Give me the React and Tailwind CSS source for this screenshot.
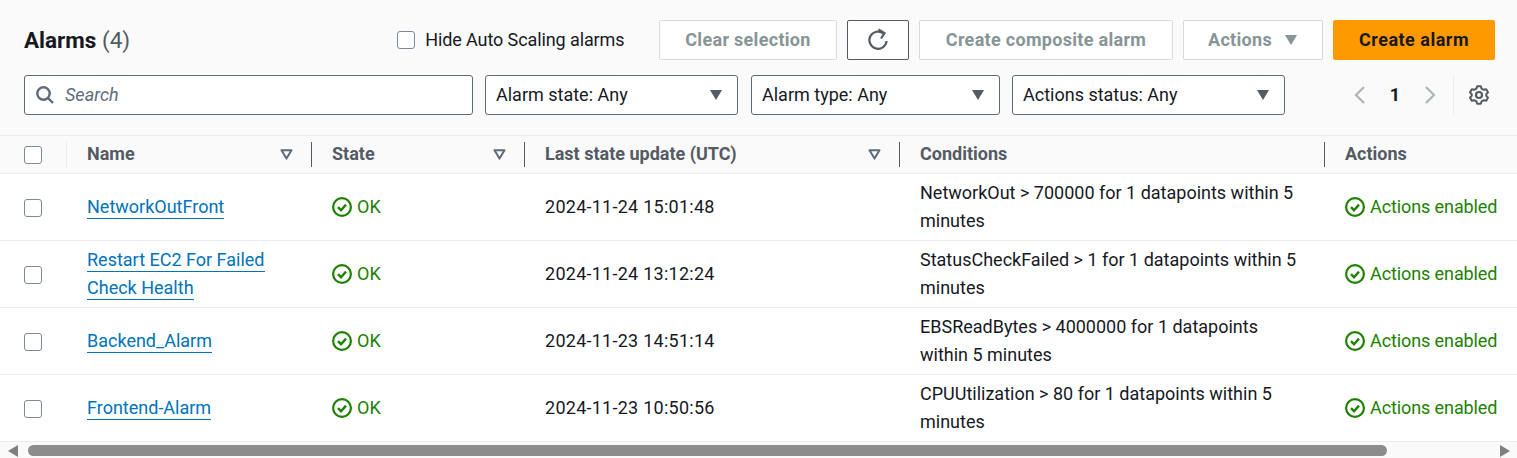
import React from 'react';

const ROWS = [
  { name: ['NetworkOutFront'], updated: '2024-11-24 15:01:48', cond: ['NetworkOut > 700000 for 1 datapoints within 5', 'minutes'] },
  { name: ['Restart EC2 For Failed', 'Check Health'], updated: '2024-11-24 13:12:24', cond: ['StatusCheckFailed > 1 for 1 datapoints within 5', 'minutes'] },
  { name: ['Backend_Alarm'], updated: '2024-11-23 14:51:14', cond: ['EBSReadBytes > 4000000 for 1 datapoints', 'within 5 minutes'] },
  { name: ['Frontend-Alarm'], updated: '2024-11-23 10:50:56', cond: ['CPUUtilization > 80 for 1 datapoints within 5', 'minutes'] },
];

const GRID = 'grid grid-cols-[67px_245px_213px_375px_425px_192px]';

const Check = () => (
  <span className="block w-[18px] h-[18px] rounded-[3px] border-[1.5px] border-[#7d8998] bg-white" />
);

const Caret = ({ className }) => (
  <svg width="14" height="12" viewBox="0 0 14 12" className={className}>
    <path d="M1 1h12L7 11z" fill="currentColor" />
  </svg>
);

const SortIcon = () => (
  <svg width="13" height="11" viewBox="0 0 13 11" className="text-[#5f6b7a]">
    <path d="M1.5 1.2h10L6.5 9.6z" fill="none" stroke="currentColor" strokeWidth="2" strokeLinejoin="round" />
  </svg>
);

const OkIcon = () => (
  <svg width="20" height="20" viewBox="0 0 20 20" className="shrink-0">
    <circle cx="10" cy="10" r="8.9" fill="none" stroke="#1d8102" strokeWidth="2.2" />
    <path d="M6 10.2l3 3 5-5.6" fill="none" stroke="#1d8102" strokeWidth="2.4" />
  </svg>
);

const Select = ({ label, width }) => (
  <div className={`${width} h-10 flex items-center justify-between pl-[10px] pr-[14px] bg-white border border-[#5f6b7a] rounded-[3px] text-[#16191f]`}>
    <span>{label}</span>
    <Caret className="text-[#545b64]" />
  </div>
);

const DisabledButton = ({ width, children }) => (
  <button className={`${width} h-10 flex items-center justify-center gap-3 bg-white border border-[#d5dbdb] rounded-[2px] font-bold tracking-[0.3px] text-[#879596]`}>
    {children}
  </button>
);

export default function App() {
  return (
    <div className="w-[1517px] h-[458px] overflow-hidden bg-white text-[18px] leading-[28px] font-['Roboto','Liberation_Sans',sans-serif] text-[#16191f]">
      <div className="h-[136px] bg-[#fafafa] border-b border-[#eaeded] pl-6 pr-[22px] pt-5">
        <div className="flex items-center h-10">
          <h1 className="text-[22.5px] font-bold">
            Alarms <span className="font-normal text-[#545b64]">(4)</span>
          </h1>
          <label className="ml-[267px] flex items-center gap-[10px]">
            <Check />
            <span className="tracking-[-0.1px]">Hide Auto Scaling alarms</span>
          </label>
          <div className="ml-auto flex items-center gap-[10px]">
            <DisabledButton width="w-[178px]">Clear selection</DisabledButton>
            <button className="w-[62px] h-10 flex items-center justify-center bg-white border border-[#545b64] rounded-[2px]">
              <svg width="22" height="24" viewBox="0 0 22 24" fill="none" stroke="#545b64" strokeWidth="2.2">
                <path d="M16.5 5.5A8.6 8.6 0 1 0 19.6 13" />
                <path d="M11.5 1.5l6 3.5-3.5 5.5" />
              </svg>
            </button>
            <DisabledButton width="w-[254px]">Create composite alarm</DisabledButton>
            <DisabledButton width="w-[140px]">
              Actions <Caret className="text-[#879596]" />
            </DisabledButton>
            <button className="w-[162px] h-10 bg-[#ff9900] rounded-[2px] font-bold tracking-[0.5px] text-[#16191f]">Create alarm</button>
          </div>
        </div>
        <div className="flex items-center h-10 mt-[15px]">
          <div className="w-[449px] h-10 flex items-center gap-[10px] pl-[10px] bg-white border border-[#5f6b7a] rounded-[3px]">
            <svg width="20" height="20" viewBox="0 0 20 20" fill="none" stroke="#5f6b7a" strokeWidth="2.4">
              <circle cx="8.5" cy="8.5" r="6.2" />
              <path d="M13 13l5 5" />
            </svg>
            <span className="italic text-[#5f6b7a]">Search</span>
          </div>
          <div className="ml-3 flex">
            <Select label="Alarm state: Any" width="w-[253px]" />
            <div className="ml-[13px]"><Select label="Alarm type: Any" width="w-[249px]" /></div>
            <div className="ml-3"><Select label="Actions status: Any" width="w-[273px]" /></div>
          </div>
          <div className="ml-auto mr-[6px] flex items-center h-10">
            <svg width="14" height="20" viewBox="0 0 14 20" fill="none" stroke="#aab7b8" strokeWidth="2.2">
              <path d="M11 2L3 10l8 8" />
            </svg>
            <span className="w-[56px] text-center font-bold">1</span>
            <svg width="14" height="20" viewBox="0 0 14 20" fill="none" stroke="#aab7b8" strokeWidth="2.2">
              <path d="M3 2l8 8-8 8" />
            </svg>
            <div className="ml-4 mr-[15px] w-px h-10 bg-[#eaeded]" />
            <svg width="20" height="20" viewBox="0 0 20 20" fill="none" stroke="#545b64" strokeWidth="2.2" strokeLinejoin="round">
              <path d="M8 1.5h4l.8 2.6 2.3 1.3 2.7-.6 2 3.4-1.9 2v1.6l1.9 2-2 3.4-2.7-.6-2.3 1.3-.8 2.6H8l-.8-2.6-2.3-1.3-2.7.6-2-3.4 1.9-2V10.2L.2 8.2l2-3.4 2.7.6 2.3-1.3z" transform="translate(10 10) scale(.92) translate(-10 -11)" />
              <circle cx="10" cy="10" r="3" />
            </svg>
          </div>
        </div>
      </div>

      <div className={`${GRID} h-[38px] bg-[#fafafa] border-b border-[#eaeded] font-bold text-[#545b64]`}>
        <div className="pl-6 flex items-center">
          <Check />
          <span className="ml-auto w-px h-[25px] bg-[#eaeded]" />
        </div>
        {[['Name', true], ['State', true], ['Last state update (UTC)', true], ['Conditions', false], ['Actions', false]].map(([label, sortable], i) => (
          <div key={label} className="flex items-center justify-between pl-5">
            <span className="pb-[2px]">{label}</span>
            {i < 4 && (
              <span className="flex items-center gap-[18px]">
                {sortable && <SortIcon />}
                <span className="w-px h-[25px] bg-[#545b64]" />
              </span>
            )}
          </div>
        ))}
      </div>

      {ROWS.map((row) => (
        <div key={row.updated} className={`${GRID} h-[67px] border-b border-[#eaeded]`}>
          <div className="pl-6 flex items-center pt-px"><Check /></div>
          <div className="pl-5 flex flex-col justify-center text-[#0073bb]">
            {row.name.map((line) => (
              <div key={line}>
                <a href="#" className="border-b border-[#0073bb] leading-[22px] inline-block">{line}</a>
              </div>
            ))}
          </div>
          <div className="pl-5 flex items-center gap-[5px] text-[#1d8102]">
            <OkIcon /> OK
          </div>
          <div className="pl-5 flex items-center tracking-[0.26px]">{row.updated}</div>
          <div className="pl-5 flex flex-col justify-center">
            {row.cond.map((line) => <div key={line}>{line}</div>)}
          </div>
          <div className="pl-5 flex items-center gap-[5px] text-[#1d8102] whitespace-nowrap tracking-[-0.1px]">
            <OkIcon /> Actions enabled
          </div>
        </div>
      ))}

      <div className="h-4 bg-[#fafafa] flex items-center pl-2 pr-[7px] pt-px">
        <svg width="10" height="12" viewBox="0 0 10 12"><path d="M10 0v12L0 6z" fill="#7f7f7f" /></svg>
        <div className="ml-[10px] w-[1359px] h-[11px] rounded-full bg-[#8c8c8c]" />
        <svg width="10" height="12" viewBox="0 0 10 12" className="ml-auto"><path d="M0 0v12l10-6z" fill="#7f7f7f" /></svg>
      </div>
    </div>
  );
}
